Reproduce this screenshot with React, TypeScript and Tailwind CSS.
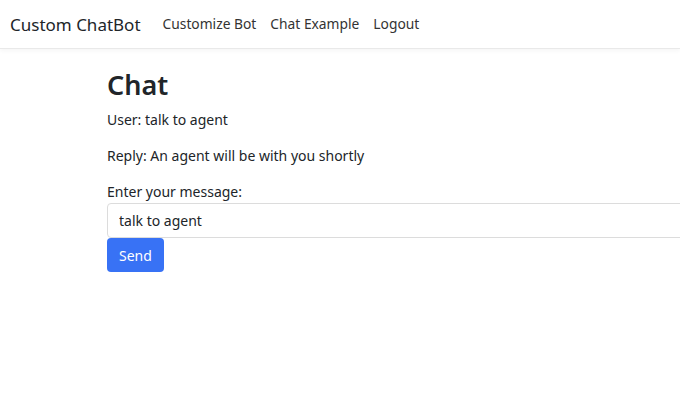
import { useState } from 'react'

const font = { fontFamily: '"Noto Sans", "Open Sans", sans-serif' }

export default function App() {
  const [message, setMessage] = useState('talk to agent')

  return (
    <div className="min-h-screen w-full overflow-hidden bg-white text-[#212529]" style={font}>
      {/* Navbar */}
      <nav className="flex h-[49px] items-center border-b border-[#e9e9e9] bg-white px-[10px] shadow-[0_2px_4px_rgba(0,0,0,0.04)]">
        <span className="mr-[22px] text-[17px] leading-none">Custom ChatBot</span>
        <div className="flex items-center gap-[14px] text-[13.8px] text-[#333]">
          <a href="#">Customize Bot</a>
          <a href="#">Chat Example</a>
          <a href="#">Logout</a>
        </div>
      </nav>

      {/* Content */}
      <main className="ml-[107px] w-[640px] pt-[18px]">
        <h1 className="text-[27px] font-semibold leading-[36px]">Chat</h1>
        <p className="mt-[6px] text-[14px] leading-[22px]">User: talk to agent</p>
        <p className="mt-[14px] text-[14px] leading-[22px]">Reply: An agent will be with you shortly</p>

        <form className="mt-[14px]" onSubmit={(e) => e.preventDefault()}>
          <label className="block text-[14px] leading-[22px]">Enter your message:</label>
          <input
            type="text"
            value={message}
            onChange={(e) => setMessage(e.target.value)}
            className="block h-[35px] w-full rounded-[4px] border border-[#dcdcdc] px-[11px] text-[14px] focus:outline-none"
          />
          <button
            type="submit"
            className="h-[34px] rounded-[4px] bg-[#3872f5] px-[12px] text-[14px] text-white"
          >
            Send
          </button>
        </form>
      </main>
    </div>
  )
}
